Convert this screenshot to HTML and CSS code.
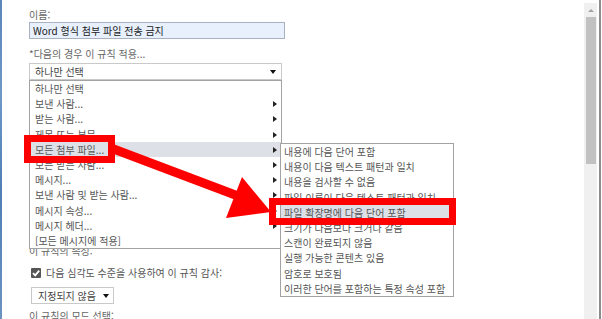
FILE: index.html
```html
<!DOCTYPE html>
<html lang="ko">
<head>
<meta charset="utf-8">
<title>규칙</title>
<link rel="stylesheet" href="styles.css">
</head>
<body>
<div class="window">
  <div class="edge"></div>
  <main class="content">
    <div class="label first">이름:</div>
    <div class="input">Word 형식 첨부 파일 전송 금지</div>
    <div class="label second">*다음의 경우 이 규칙 적용...</div>
    <div class="select wide"><span>하나만 선택</span><span class="caret"></span></div>
    <div class="label props">이 규칙의 속성:</div>
    <div class="check-row">
      <span class="checkbox"><svg width="10" height="10" viewBox="0 0 10 10"><path d="M2 5.2 L4.2 7.4 L8.2 2.6" fill="none" stroke="#fff" stroke-width="1.8"/></svg></span>
      <span>다음 심각도 수준을 사용하여 이 규칙 감사:</span>
    </div>
    <div class="select small"><span>지정되지 않음</span><span class="caret"></span></div>
    <div class="label mode">이 규칙의 모드 선택:</div>

    <ul class="menu">
      <li>하나만 선택</li>
      <li class="sub">보낸 사람...</li>
      <li class="sub">받는 사람...</li>
      <li class="sub">제목 또는 본문</li>
      <li class="sub active">모든 첨부 파일...</li>
      <li class="sub">모든 받는 사람...</li>
      <li class="sub">메시지...</li>
      <li class="sub">보낸 사람 및 받는 사람...</li>
      <li class="sub">메시지 속성...</li>
      <li class="sub">메시지 헤더...</li>
      <li>[모든 메시지에 적용]</li>
    </ul>

    <ul class="menu submenu">
      <li>내용에 다음 단어 포함</li>
      <li>내용이 다음 텍스트 패턴과 일치</li>
      <li>내용을 검사할 수 없음</li>
      <li>파일 이름이 다음 텍스트 패턴과 일치</li>
      <li class="active">파일 확장명에 다음 단어 포함</li>
      <li>크기가 다음보다 크거나 같음</li>
      <li>스캔이 완료되지 않음</li>
      <li>실행 가능한 콘텐츠 있음</li>
      <li>암호로 보호됨</li>
      <li>이러한 단어를 포함하는 특정 속성 포함</li>
    </ul>

    <div class="mark mark-one"></div>
    <div class="mark mark-two"></div>
    <svg class="arrow" width="300" height="240" viewBox="0 0 300 240">
      <line x1="111" y1="148" x2="238" y2="196" stroke="#ff0000" stroke-width="9"/>
      <polygon points="271,212 242,177 226,218" fill="#ff0000"/>
    </svg>
  </main>
  <div class="scrollbar">
    <div class="sb-btn"><span class="sb-up"></span></div>
    <div class="sb-thumb"></div>
  </div>
  <div class="gap"></div>
  <div class="frame"></div>
</div>
</body>
</html>
```

FILE: styles.css
```css
* { box-sizing: border-box; }
html, body { margin: 0; padding: 0; background: #fff; }
body {
  font-family: "Noto Sans CJK KR", "Noto Sans", sans-serif;
  font-size: 10px;
  color: #555;
  overflow: hidden;
}
.window {
  display: flex;
  width: 602px;
  height: 319px;
  overflow: hidden;
}
.edge {
  width: 2px;
  flex: none;
  background: linear-gradient(#5b86b8, #6d98c8 30%, #4f7fb5 60%, #6b93c2);
}
.content {
  position: relative;
  flex: 1;
  padding-left: 27px;
  display: flex;
  flex-direction: column;
  align-items: flex-start;
}
.label {
  height: 15px;
  line-height: 15px;
  color: #666;
  white-space: nowrap;
}
.first { margin-top: 7px; }
.second { margin-top: 7px; }
.props { margin-top: 163px; }
.mode { margin-top: 4px; }
.input {
  width: 256px;
  height: 17px;
  line-height: 15px;
  padding-left: 3px;
  border: 1px solid #a9b2c2;
  background: #e8f0fe;
  color: #222;
  white-space: nowrap;
}
.select {
  display: flex;
  align-items: center;
  justify-content: space-between;
  height: 17px;
  border: 1px solid #c9c9c9;
  background: #fff;
  color: #444;
  white-space: nowrap;
}
.select.wide {
  width: 253px;
  margin-top: 2px;
  padding: 0 5px 0 5px;
}
.select.small {
  width: 83px;
  margin-top: 7px;
  margin-left: 2px;
  padding: 0 4px 0 6px;
}
.caret {
  width: 0;
  height: 0;
  border-left: 3px solid transparent;
  border-right: 3px solid transparent;
  border-top: 4px solid #111;
}
.check-row {
  display: flex;
  align-items: center;
  gap: 5px;
  height: 15px;
  margin-top: 7px;
  margin-left: 2px;
  color: #555;
  white-space: nowrap;
}
.checkbox {
  display: flex;
  width: 10px;
  height: 10px;
  border-radius: 1px;
  background: #555;
}
.menu {
  position: absolute;
  left: 27px;
  top: 80px;
  width: 253px;
  margin: 0;
  padding: 0;
  list-style: none;
  border: 1px solid #a3a3a3;
  background: #fff;
}
.menu li {
  position: relative;
  height: 15.2px;
  line-height: 15.2px;
  padding-left: 5px;
  color: #555;
  white-space: nowrap;
}
.menu li.sub::after {
  content: "";
  position: absolute;
  right: 4px;
  top: 5px;
  border-top: 3px solid transparent;
  border-bottom: 3px solid transparent;
  border-left: 4px solid #222;
}
.menu li.active { background: #dde1e7; }
.submenu {
  left: 278px;
  top: 143px;
  width: 174px;
}
.submenu li { padding-left: 3px; }
.mark {
  position: absolute;
  border: 7px solid #ff0000;
}
.mark-one { left: 22px; top: 135px; width: 91px; height: 28px; }
.mark-two { left: 267px; top: 198px; width: 187px; height: 27px; }
.arrow {
  position: absolute;
  left: -2px;
  top: 0;
}
.scrollbar {
  flex: none;
  width: 13px;
  margin-top: 3px;
  padding: 0 1px 0 2px;
  background: #f0f0f0;
  display: flex;
  flex-direction: column;
}
.sb-btn {
  height: 14px;
  display: flex;
  align-items: center;
  justify-content: center;
}
.sb-up {
  width: 0;
  height: 0;
  border-left: 3px solid transparent;
  border-right: 3px solid transparent;
  border-bottom: 3px solid #a3a3a3;
}
.sb-thumb {
  height: 147px;
  background: #c1c1c1;
}
.gap { flex: none; width: 2px; }
.frame { flex: none; width: 2px; background: #8c8c8c; margin-right: 1px; }
```
